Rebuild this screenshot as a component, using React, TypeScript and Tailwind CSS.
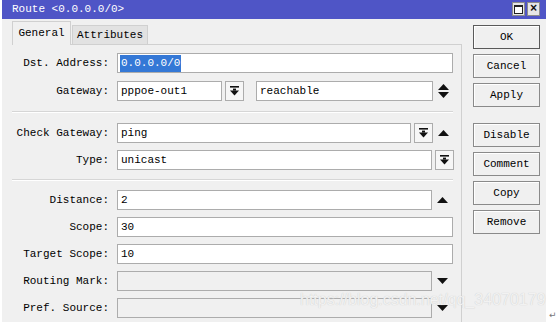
import React from 'react';

const DropIcon = () => (
  <svg width="9" height="10" viewBox="0 0 9 10" className="block">
    <rect x="0" y="0" width="9" height="1.6" fill="#111" />
    <rect x="3" y="2.6" width="3" height="2" fill="#111" />
    <polygon points="0,4.6 9,4.6 4.5,9.4" fill="#111" />
  </svg>
);

const UpIcon = () => (
  <svg width="11" height="6" viewBox="0 0 11 6" className="block">
    <polygon points="0,6 11,6 5.5,0" fill="#111" />
  </svg>
);

const DownIcon = () => (
  <svg width="11" height="6" viewBox="0 0 11 6" className="block">
    <polygon points="0,0 11,0 5.5,6" fill="#111" />
  </svg>
);

const UpDownIcon = () => (
  <svg width="11" height="14" viewBox="0 0 11 14" className="block">
    <polygon points="0,6 11,6 5.5,0" fill="#111" />
    <polygon points="0,8 11,8 5.5,14" fill="#111" />
  </svg>
);

const Label = ({ text }: { text: string }) => (
  <div className="w-[97px] shrink-0 text-right whitespace-pre text-black">{text}</div>
);

const Field = ({ value, className = '', disabled = false }: { value?: React.ReactNode; className?: string; disabled?: boolean }) => (
  <div
    className={`h-[20px] flex items-center px-[3px] border border-[#acacac] whitespace-pre text-black ${disabled ? 'bg-[#f0f0f0]' : 'bg-white'} ${className}`}
  >
    {value}
  </div>
);

const DropBtn = () => (
  <div className="w-[19px] h-[20px] shrink-0 flex items-center justify-center border border-[#acacac] bg-[#f6f6f6]">
    <DropIcon />
  </div>
);

const Side = ({ children }: { children?: React.ReactNode }) => (
  <div className="w-[21px] shrink-0 flex items-center justify-center">{children}</div>
);

const Separator = () => (
  <div className="mr-[8px] border-t border-[#d6d6d6] border-b border-b-white" />
);

const buttons1 = ['OK', 'Cancel', 'Apply'];
const buttons2 = ['Disable', 'Comment', 'Copy', 'Remove'];

const Btn = ({ label, primary }: { label: string; primary?: boolean }) => (
  <div
    className={`w-[67px] h-[24px] flex items-center justify-center pt-[1px] bg-[#f0f0f0] text-black border ${primary ? 'border-[#5a5a5a]' : 'border-[#8a8a8a]'} shadow-[inset_1px_1px_0_#ffffff]`}
  >
    {label}
  </div>
);

export default function App() {
  return (
    <div
      className="relative w-[558px] h-[322px] bg-white overflow-hidden text-[11px] leading-none"
      style={{ fontFamily: '"Liberation Mono", "DejaVu Sans Mono", monospace' }}
    >
      <div className="ml-[2px] w-[544px] h-full bg-[#f0f0f0] flex flex-col">
        <div className="h-[19px] shrink-0 bg-[#4f55c6] flex items-center pl-[10px] pr-[6px] text-white">
          <span className="flex-1">Route &lt;0.0.0.0/0&gt;</span>
          <div className="flex gap-[2px] mt-[-1px]">
            <div className="w-[13px] h-[14px] bg-[#e6e6e6] border border-[#8c8c8c] flex items-center justify-center">
              <div className="w-[9px] h-[9px] border border-[#222] border-t-2 bg-white" />
            </div>
            <div className="w-[13px] h-[14px] bg-[#e6e6e6] border border-[#8c8c8c] flex items-center justify-center text-[#111] font-bold text-[12px]">
              ×
            </div>
          </div>
        </div>

        <div className="flex flex-1 min-h-0">
          <div className="w-[460px] shrink-0 pl-[10px] flex flex-col">
            <div className="h-[25px] flex items-end">
              <div className="h-[24px] w-[59px] flex items-center justify-center bg-[#f0f0f0] border border-b-0 border-[#d0d0d0] relative top-[1px] text-black">
                General
              </div>
              <div className="h-[19px] w-[76px] ml-[1px] flex items-center justify-center pt-[1px] bg-[#e2e2e2] border border-b-0 border-[#d0d0d0] text-black">
                Attributes
              </div>
            </div>
            <div className="flex-1 border-t border-r border-[#d0d0d0] pt-[8px] flex flex-col">
              <div className="flex flex-col gap-[8px]">
                <div className="flex items-center gap-[8px]">
                  <Label text="Dst. Address:" />
                  <Field
                    className="w-[336px]"
                    value={<span className="bg-[#3478d6] text-white h-[17px] flex items-center px-[1px] ml-[-1px]">0.0.0.0/0</span>}
                  />
                </div>
                <div className="flex items-center gap-[8px]">
                  <Label text="Gateway:" />
                  <div className="flex items-center">
                    <Field className="w-[105px]" value="pppoe-out1" />
                    <div className="ml-[3px]">
                      <DropBtn />
                    </div>
                    <Field className="w-[177px] ml-[12px]" value="reachable" />
                    <Side>
                      <UpDownIcon />
                    </Side>
                  </div>
                </div>
              </div>

              <div className="mt-[10px] mb-[10px]">
                <Separator />
              </div>

              <div className="flex flex-col gap-[7px]">
                <div className="flex items-center gap-[8px]">
                  <Label text="Check Gateway:" />
                  <div className="flex items-center gap-[3px]">
                    <Field className="w-[294px]" value="ping" />
                    <DropBtn />
                  </div>
                  <div className="ml-[-8px]">
                    <Side>
                      <UpIcon />
                    </Side>
                  </div>
                </div>
                <div className="flex items-center gap-[8px]">
                  <Label text="Type:" />
                  <div className="flex items-center gap-[3px]">
                    <Field className="w-[315px]" value="unicast" />
                    <DropBtn />
                  </div>
                </div>
              </div>

              <div className="mt-[9px] mb-[9px]">
                <Separator />
              </div>

              <div className="flex flex-col gap-[7px]">
                <div className="flex items-center gap-[8px]">
                  <Label text="Distance:" />
                  <div className="flex items-center">
                    <Field className="w-[315px]" value="2" />
                    <Side>
                      <UpIcon />
                    </Side>
                  </div>
                </div>
                <div className="flex items-center gap-[8px]">
                  <Label text="Scope:" />
                  <Field className="w-[336px]" value="30" />
                </div>
                <div className="flex items-center gap-[8px]">
                  <Label text="Target Scope:" />
                  <Field className="w-[336px]" value="10" />
                </div>
                <div className="flex items-center gap-[8px]">
                  <Label text="Routing Mark:" />
                  <div className="flex items-center">
                    <Field className="w-[315px]" disabled />
                    <Side>
                      <DownIcon />
                    </Side>
                  </div>
                </div>
                <div className="flex items-center gap-[8px]">
                  <Label text="Pref. Source:" />
                  <div className="flex items-center">
                    <Field className="w-[315px]" disabled />
                    <Side>
                      <DownIcon />
                    </Side>
                  </div>
                </div>
              </div>
            </div>
          </div>

          <div className="flex-1 pl-[11px] pt-[6px] flex flex-col gap-[5px]">
            {buttons1.map((b, i) => (
              <Btn key={b} label={b} primary={i === 0} />
            ))}
            <div className="h-[6px]" />
            {buttons2.map((b) => (
              <Btn key={b} label={b} />
            ))}
          </div>
        </div>
      </div>

      <div
        className="absolute left-[300px] top-[292px] text-[16px] text-[#f2f2f2] whitespace-pre [text-shadow:0_0_1px_#c4c4c4]"
        style={{ fontFamily: '"Liberation Sans", Arial, sans-serif' }}
      >
        https://blog.csdn.net/qq_34070179
      </div>
      <div className="absolute left-[549px] top-[311px] text-[9px] text-[#777]" style={{ fontFamily: '"DejaVu Sans", sans-serif' }}>
        ↵
      </div>
    </div>
  );
}
